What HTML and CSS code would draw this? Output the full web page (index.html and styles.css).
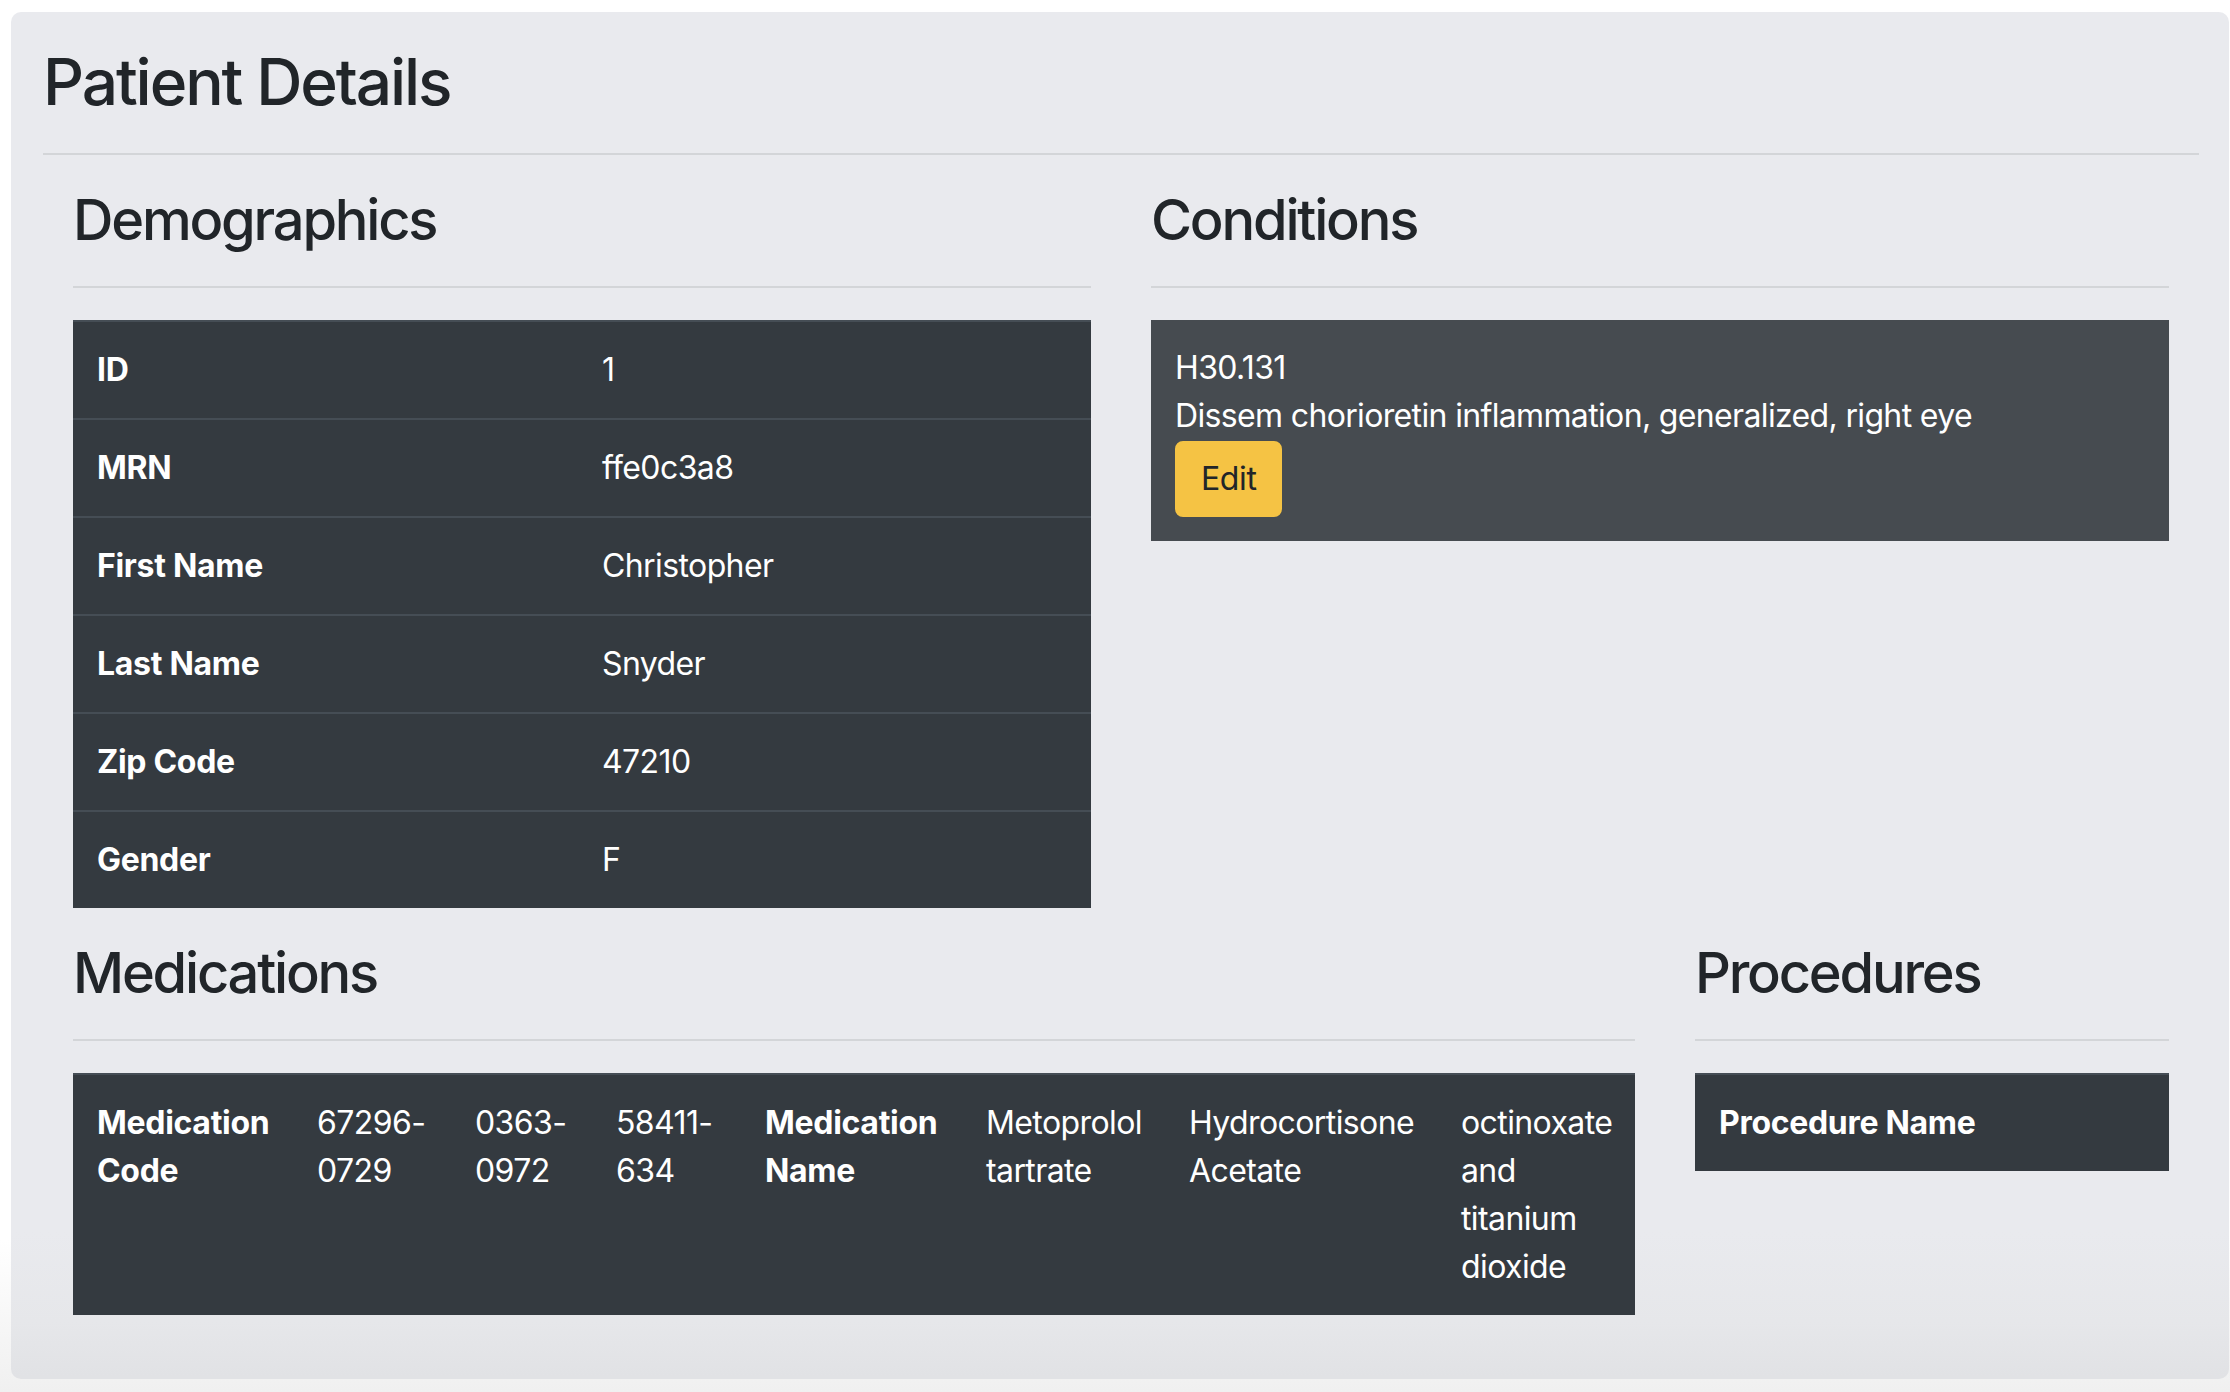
FILE: index.html
```html
<!DOCTYPE html>
<html lang="en">
<head>
<meta charset="utf-8">
<title>Patient Details</title>
<link rel="stylesheet" href="styles.css">
</head>
<body>
<div class="card">
  <h2 class="page-title">Patient Details</h2>
  <hr class="rule">
  <div class="row">
    <section class="col col-half">
      <h3 class="section-title">Demographics</h3>
      <hr class="rule">
      <table class="dark-table demo-table">
        <colgroup><col class="demo-label"><col class="demo-value"></colgroup>
        <tbody>
          <tr><th>ID</th><td>1</td></tr>
          <tr><th>MRN</th><td>ffe0c3a8</td></tr>
          <tr><th>First Name</th><td>Christopher</td></tr>
          <tr><th>Last Name</th><td>Snyder</td></tr>
          <tr><th>Zip Code</th><td>47210</td></tr>
          <tr><th>Gender</th><td>F</td></tr>
        </tbody>
      </table>
    </section>
    <section class="col col-half">
      <h3 class="section-title">Conditions</h3>
      <hr class="rule">
      <div class="condition">
        <div class="condition-line">H30.131</div>
        <div class="condition-line">Dissem chorioretin inflammation, generalized, right eye</div>
        <button class="btn-edit" type="button">Edit</button>
      </div>
    </section>
  </div>
  <div class="row">
    <section class="col col-meds">
      <h3 class="section-title">Medications</h3>
      <hr class="rule">
      <table class="dark-table meds-table">
        <colgroup>
          <col class="m1"><col class="m2"><col class="m3"><col class="m4">
          <col class="m5"><col class="m6"><col class="m7"><col class="m8">
        </colgroup>
        <tbody>
          <tr>
            <th>Medication Code</th>
            <td>67296-0729</td>
            <td>0363-0972</td>
            <td>58411-634</td>
            <th>Medication Name</th>
            <td>Metoprolol tartrate</td>
            <td>Hydrocortisone Acetate</td>
            <td>octinoxate and titanium dioxide</td>
          </tr>
        </tbody>
      </table>
    </section>
    <section class="col col-procs">
      <h3 class="section-title">Procedures</h3>
      <hr class="rule">
      <table class="dark-table procs-table">
        <tbody>
          <tr><th>Procedure Name</th></tr>
        </tbody>
      </table>
    </section>
  </div>
</div>
</body>
</html>
```

FILE: styles.css
```css
html, body {
  margin: 0;
  padding: 0;
}

body {
  width: 2230px;
  height: 1392px;
  overflow: hidden;
  font-family: Inter, "Noto Sans", "Liberation Sans", sans-serif;
  color: #212529;
  background: linear-gradient(to bottom, #ffffff 0px, #ffffff 1240px, #f7f7f7 1320px, #f0f0f0 1392px);
}

.card {
  box-sizing: border-box;
  margin: 12px 1px 0 11px;
  width: 2218px;
  padding: 32px 30px 32px 32px;
  border-radius: 10px;
  background: linear-gradient(to bottom, #e9eaee 0px, #e9eaee 1220px, #e6e7ea 1310px, #e1e2e5 1364px);
}

.page-title {
  margin: 0 0 16px 0;
  font-size: 64px;
  font-weight: 500;
  line-height: 1.2;
  letter-spacing: -2.1px;
}

.section-title {
  margin: 0 0 16px 0;
  font-size: 56px;
  font-weight: 500;
  line-height: 1.2;
  letter-spacing: -2.2px;
}

.rule {
  margin: 32px 0;
  border: 0;
  border-top: 2px solid #d3d5d8;
  height: 0;
}

.row {
  display: flex;
}

.col {
  box-sizing: border-box;
  padding: 0 30px;
}

.col-half {
  flex: 0 0 50%;
}

.col-meds {
  flex: 0 0 1622px;
}

.col-procs {
  flex: 1 1 0;
}

.dark-table {
  width: 100%;
  border-collapse: collapse;
  table-layout: fixed;
  background: #343a40;
  color: #ffffff;
  font-size: 32px;
  line-height: 48px;
  margin-bottom: 32px;
}

.dark-table th,
.dark-table td {
  padding: 24px;
  border-top: 2px solid #454d55;
  text-align: left;
  vertical-align: top;
}

.dark-table th {
  font-weight: 700;
  letter-spacing: -0.3px;
}

.dark-table td {
  font-weight: 400;
  letter-spacing: -0.6px;
}

.demo-label { width: 505px; }
.demo-value { width: 513px; }

.meds-table { width: 1562px; }
.m1 { width: 220px; }
.m2 { width: 158px; }
.m3 { width: 141px; }
.m4 { width: 149px; }
.m5 { width: 221px; }
.m6 { width: 203px; }
.m7 { width: 272px; }
.m8 { width: 198px; }

.condition {
  background: #464b50;
  color: #ffffff;
  padding: 24px;
  font-size: 32px;
  line-height: 48px;
  letter-spacing: -0.65px;
}

.btn-edit {
  display: inline-block;
  margin-top: 1px;
  padding: 12px 24px;
  border: 2px solid #f5c344;
  border-radius: 8px;
  background: #f5c344;
  color: #212529;
  font-family: inherit;
  font-size: 32px;
  line-height: 48px;
  font-weight: 400;
  letter-spacing: -0.4px;
}
```
